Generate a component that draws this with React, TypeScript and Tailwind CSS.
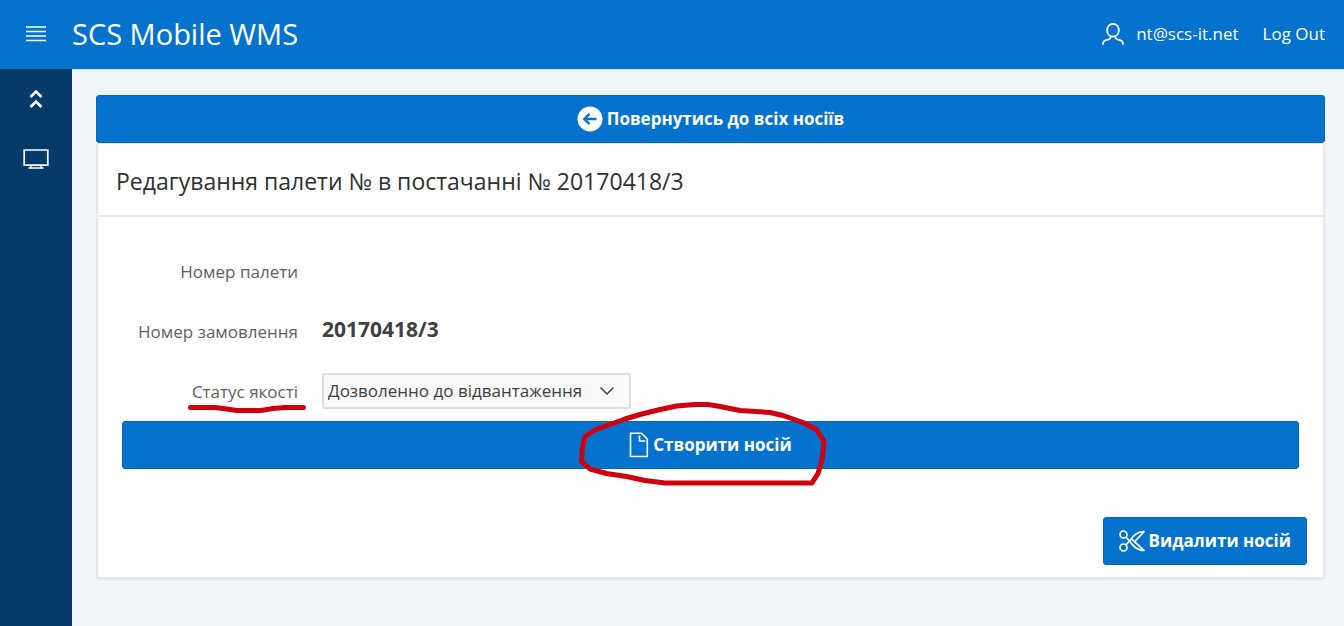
import React from 'react';

const FONT = 'font-["Open_Sans","Noto_Sans",sans-serif]';

const MenuIcon = () => (
  <svg width="20" height="16" viewBox="0 0 20 16" stroke="#fff" strokeWidth="1.5" aria-hidden="true">
    <path d="M0 1h20M0 5.500h20M0 10h20M0 14.500h20" />
  </svg>
);

const CollapseIcon = () => (
  <svg width="14" height="20" viewBox="0 0 14 20" fill="none" stroke="#fff" strokeWidth="2.6" aria-hidden="true">
    <path d="M1.500 8 7 2.500 12.500 8M1.500 18 7 12.500 12.500 18" />
  </svg>
);

const DesktopIcon = () => (
  <svg width="26" height="20" viewBox="0 0 26 20" fill="none" stroke="#fff" aria-hidden="true">
    <path strokeWidth="1.7" d="M1.200 1h23.600v15.200H1.200z" />
    <path strokeWidth="1.5" d="M7.800 16.500v2M18.200 16.500v2M5.500 19h15" />
  </svg>
);

const UserIcon = () => (
  <svg width="22" height="22" viewBox="0 0 22 22" fill="none" stroke="#fff" strokeWidth="1.8" strokeLinecap="round" aria-hidden="true">
    <path d="M11 1c3.500 0 5.800 2.600 5.800 6.200S14.500 13.600 11 13.600 5.200 10.800 5.200 7.200 7.500 1 11 1z" />
    <path d="M8.800 13.500c0 2.600-1.600 3-4 3.400C2.300 17.400 1 18.500 1 21M13.200 13.500c0 2.600 1.600 3 4 3.400 2.500.5 3.800 1.600 3.800 4.100" />
  </svg>
);

const BackIcon = () => (
  <svg width="26" height="26" viewBox="0 0 26 26" fill="none" aria-hidden="true">
    <circle cx="13" cy="13" r="12.500" fill="#fff" />
    <path d="M19.500 13H8M12.500 7.800 7.300 13l5.200 5.200" stroke="#0572ce" strokeWidth="2.400" />
  </svg>
);

const FileIcon = () => (
  <svg width="20" height="26" viewBox="0 0 20 26" fill="none" stroke="#fff" strokeWidth="1.600" aria-hidden="true">
    <path d="M1.500 1.200h11l5.800 5.800v17.500H1.500zM10.500 3.500v5.500h5.800" />
  </svg>
);

const CutIcon = () => (
  <svg width="26" height="22" viewBox="0 0 26 22" fill="none" stroke="#fff" strokeWidth="1.700" strokeLinejoin="round" aria-hidden="true">
    <circle cx="4.500" cy="4.500" r="3.500" />
    <circle cx="4.500" cy="17.500" r="3.500" />
    <path d="M7 15 10.500 11C14.500 5.500 18 1.700 25 1.700L15 12.500" />
    <path d="M7 7 10.500 11C14.500 16.500 18 20.300 25 20.300L12.500 8.800" />
  </svg>
);

const ChevronIcon = () => (
  <svg
    className="pointer-events-none absolute right-4 top-1/2 -translate-y-1/2"
    width="16"
    height="10"
    viewBox="0 0 16 10"
    fill="none"
    stroke="#404040"
    strokeWidth="1.5"
    aria-hidden="true"
  >
    <path d="M1.500 1.500 8 8l6.500-6.500" />
  </svg>
);

// hand-drawn marker strokes
const Underline = () => (
  <svg className="pointer-events-none absolute top-full -left-1 w-[118px]" height="8" viewBox="0 0 118 8" fill="none" stroke="#d0000f" strokeWidth="5" strokeLinecap="round" strokeLinejoin="round" aria-hidden="true">
    <path d="M2.500 2.500H27l10 1.200 12 1.800h24l12-2 12-1h18.500" />
  </svg>
);

const Circle = () => (
  <svg
    className="pointer-events-none absolute left-1/2 top-1/2 -translate-x-[133px] -translate-y-[44px]"
    width="250"
    height="86"
    viewBox="0 0 250 86"
    fill="none"
    stroke="#d0000f"
    strokeWidth="5"
    strokeLinecap="round"
    strokeLinejoin="round"
    aria-hidden="true"
  >
    <path d="M117 3.500 98.500 5 80 9l-18 4.500L47 18l-15 5.500L17 29 7 35.500l-2.500 10-1 15L12 68l16.500 4.500 20 3 18.500 4 20 2.500h147l6-9.500L244 59l2-18.500-7.500-12L225 21.500l-20-7-13-3-30-2-20-4L130 3.500z" />
  </svg>
);

interface ActionButtonProps {
  icon: React.ReactNode;
  children: React.ReactNode;
  className?: string;
}

const ActionButton = ({ icon, children, className = '' }: ActionButtonProps) => (
  <button
    type="button"
    className={`flex h-12 items-center justify-center gap-1 rounded-[3px] border border-[#0467b9] bg-[#0572ce] text-[17px] font-bold text-white ${className}`}
  >
    {icon}
    {children}
  </button>
);

export default function App() {
  return (
    <div className={`flex min-h-screen flex-col bg-[#f0f5fa] text-[17px] text-[#404040] ${FONT}`}>
      <header className="flex h-[69px] items-center bg-[#0572ce] pr-[19px] pb-0.5 text-white">
        <button type="button" aria-label="Menu" className="flex w-[72px] justify-center">
          <MenuIcon />
        </button>
        <a href="#" className="text-[29px]">SCS Mobile WMS</a>
        <nav className="ml-auto flex items-center gap-6">
          <a href="#" className="flex items-center gap-3">
            <UserIcon />
            nt@scs-it.net
          </a>
          <a href="#">Log Out</a>
        </nav>
      </header>

      <div className="flex flex-1">
        <aside className="flex w-[72px] flex-col items-center bg-[#053a69]">
          <button type="button" aria-label="Collapse" className="flex h-[60px] w-full items-center justify-center">
            <CollapseIcon />
          </button>
          <a href="#" aria-label="Desktop" className="flex h-[60px] w-full items-center justify-center">
            <DesktopIcon />
          </a>
        </aside>

        <main className="min-w-0 flex-1 border-t border-[#dcdfe3] pt-[25px] pr-[19px] pb-12 pl-6">
          <ActionButton icon={<BackIcon />} className="w-full">
            Повернутись до всіх носіїв
          </ActionButton>

          <section className="rounded-[3px] border-2 border-t border-[#e6e7e8] bg-white shadow-xs">
            <h1 className="flex h-[73px] items-center border-b-2 border-[#ebebeb] px-[18px] pt-1 text-[23px] text-[#303030]">
              Редагування палети № в постачанні № 20170418/3
            </h1>

            <form className="px-4 pt-6 pb-3" onSubmit={(e) => e.preventDefault()}>
              <div className="px-2">
                <div className="grid grid-cols-[176px_1fr] gap-x-6">
                  <span className="flex h-[60px] items-center justify-end pt-0.5 text-[#606060]">Номер палети</span>
                  <span />
                  <span className="flex h-[60px] items-center justify-end pt-0.5 text-[#606060]">Номер замовлення</span>
                  <output className="flex h-[60px] items-center pb-0.5 text-[21px] font-bold">20170418/3</output>
                  <div className="flex h-[60px] items-center justify-end pt-0.5">
                    <label htmlFor="quality" className="relative text-[#606060]">
                      Статус якості
                      <Underline />
                    </label>
                  </div>
                  <div className="flex h-[60px] items-center">
                    <div className="relative">
                      <select
                        id="quality"
                        className="h-9 w-[309px] appearance-none rounded-[3px] border-2 border-[#dfdfdf] bg-[#f9f9f9] pr-10 pl-1 text-[17px]"
                      >
                        <option>Дозволенно до відвантаження</option>
                      </select>
                      <ChevronIcon />
                    </div>
                  </div>
                </div>

                <div className="relative">
                  <ActionButton icon={<FileIcon />} className="w-full">
                    Створити носій
                  </ActionButton>
                  <Circle />
                </div>
              </div>

              <div className="mt-12 flex justify-end">
                <ActionButton icon={<CutIcon />} className="px-[15px]">
                  Видалити носій
                </ActionButton>
              </div>
            </form>
          </section>
        </main>
      </div>
    </div>
  );
}
